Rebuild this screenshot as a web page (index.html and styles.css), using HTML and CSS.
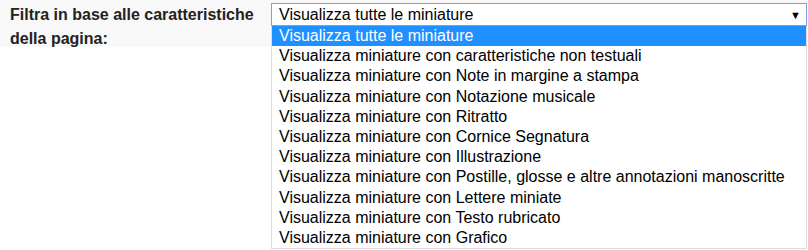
FILE: index.html
```html
<!DOCTYPE html>
<html lang="it">
<head>
<meta charset="utf-8">
<link rel="stylesheet" href="styles.css">
</head>
<body>
<div class="row">
  <label class="label">Filtra in base alle caratteristiche della pagina:</label>
  <div class="select">
    <div class="current">
      <span>Visualizza tutte le miniature</span>
      <span class="arrow">▼</span>
    </div>
    <ul class="list">
      <li class="sel">Visualizza tutte le miniature</li>
      <li>Visualizza miniature con caratteristiche non testuali</li>
      <li>Visualizza miniature con Note in margine a stampa</li>
      <li>Visualizza miniature con Notazione musicale</li>
      <li>Visualizza miniature con Ritratto</li>
      <li>Visualizza miniature con Cornice Segnatura</li>
      <li>Visualizza miniature con Illustrazione</li>
      <li>Visualizza miniature con Postille, glosse e altre annotazioni manoscritte</li>
      <li>Visualizza miniature con Lettere miniate</li>
      <li>Visualizza miniature con Testo rubricato</li>
      <li>Visualizza miniature con Grafico</li>
    </ul>
  </div>
</div>
</body>
</html>
```
FILE: styles.css
```css
html, body {
  margin: 0;
  padding: 0;
  background: #fff;
  font-family: "Liberation Sans", Arial, sans-serif;
}
.row {
  display: flex;
  align-items: flex-start;
  background: linear-gradient(#f8f8f8 0, #f8f8f8 47px, #fff 47px);
  padding-top: 3px;
}
.label {
  width: 261px;
  padding-left: 10px;
  font-weight: bold;
  font-size: 16px;
  line-height: 24px;
  color: #222;
}
.select {
  flex: 1;
  margin-right: 1px;
}
.current {
  display: flex;
  justify-content: space-between;
  align-items: center;
  height: 23px;
  box-sizing: border-box;
  border: 1px solid #7aa3d8;
  background: #fff;
  padding: 0 5px 0 7px;
  font-size: 16px;
  color: #000;
}
.arrow {
  font-size: 11px;
  color: #000;
}
.list {
  margin: 0;
  padding: 0;
  list-style: none;
  background: #fff;
  border: 1px solid #dcdcdc;
  border-top: none;
}
.list li {
  height: 20.2px;
  line-height: 20px;
  padding-left: 7px;
  font-size: 16px;
  color: #000;
  white-space: nowrap;
}
.list li.sel {
  background: #1e90ff;
  color: #fff;
}
```
